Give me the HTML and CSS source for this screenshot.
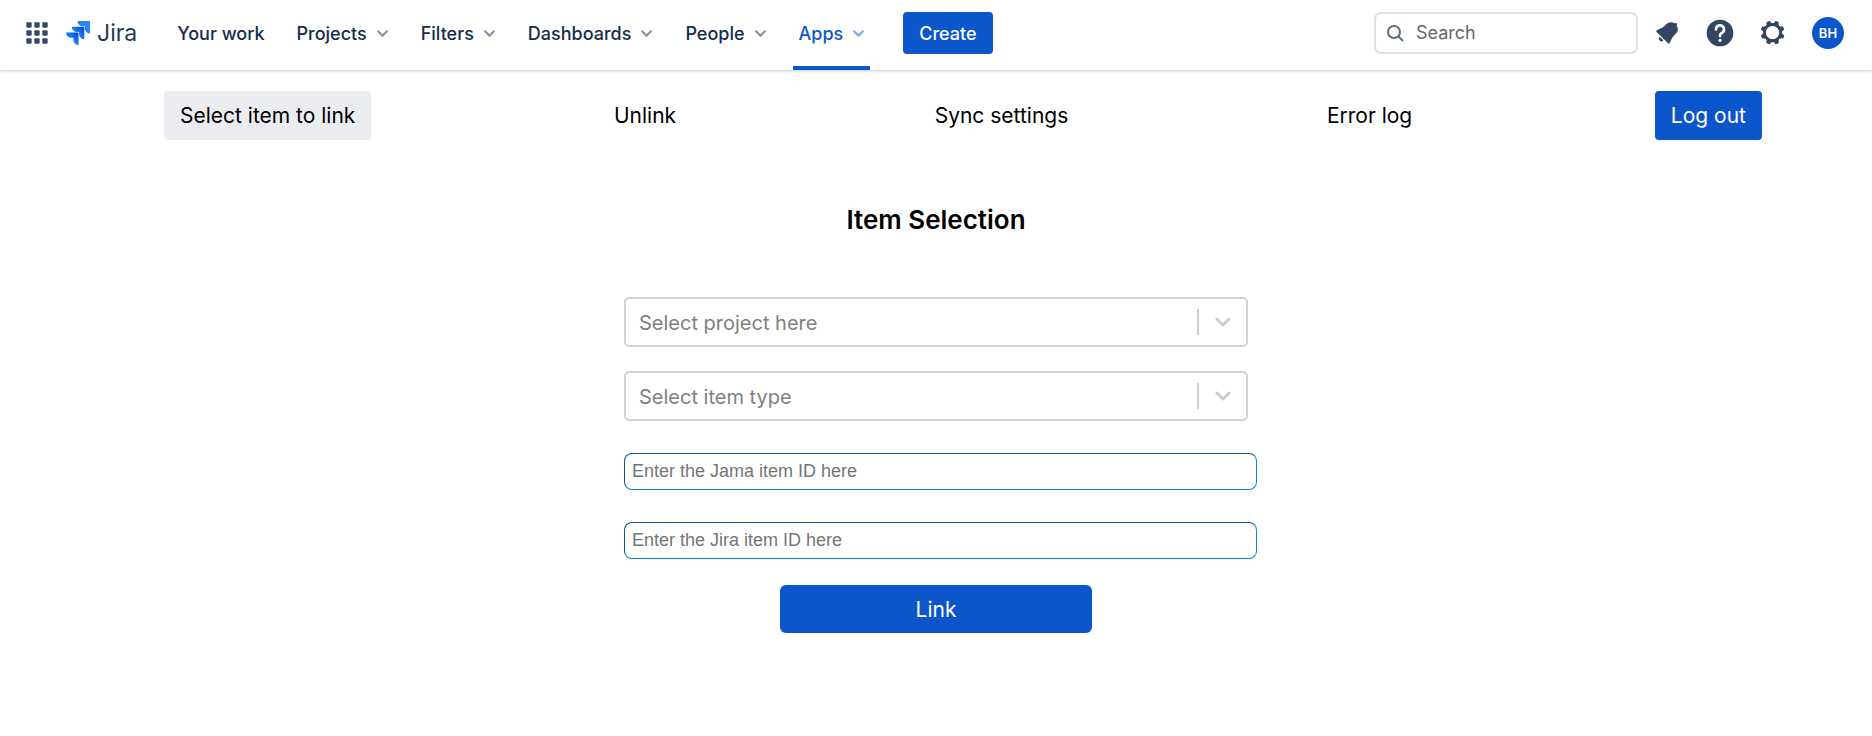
FILE: index.html
```html
<!DOCTYPE html>
<html lang="en">
<head>
<meta charset="utf-8">
<meta name="viewport" content="width=device-width, initial-scale=1">
<title>Item Selection - Jira</title>
<link rel="stylesheet" href="styles.css">
</head>
<body>
<header class="topbar">
  <button class="icon-button" type="button" aria-label="App switcher">
    <svg class="icon" viewBox="0 0 24 24" aria-hidden="true"><g fill="currentColor"><rect x="4" y="4" width="4" height="4" rx=".6"/><rect x="10" y="4" width="4" height="4" rx=".6"/><rect x="16" y="4" width="4" height="4" rx=".6"/><rect x="4" y="10" width="4" height="4" rx=".6"/><rect x="10" y="10" width="4" height="4" rx=".6"/><rect x="16" y="10" width="4" height="4" rx=".6"/><rect x="4" y="16" width="4" height="4" rx=".6"/><rect x="10" y="16" width="4" height="4" rx=".6"/><rect x="16" y="16" width="4" height="4" rx=".6"/></g></svg>
  </button>
  <a class="brand" href="#">
    <svg class="brand-mark" viewBox="0 0 24 24" aria-hidden="true">
      <defs>
        <linearGradient id="g1" x1="1" y1="0" x2=".4" y2=".6"><stop offset=".18" stop-color="#0052cc"/><stop offset="1" stop-color="#2684ff"/></linearGradient>
      </defs>
      <path fill="#2684ff" d="M23.013 0H11.455a5.215 5.215 0 0 0 5.215 5.215h2.129v2.057A5.215 5.215 0 0 0 24 12.483V1.005A1.001 1.001 0 0 0 23.013 0Z"/>
      <path fill="url(#g1)" d="M17.294 5.757H5.736a5.215 5.215 0 0 0 5.215 5.214h2.129v2.058a5.218 5.218 0 0 0 5.215 5.214V6.758a1.001 1.001 0 0 0-1.001-1.001z"/>
      <path fill="url(#g1)" d="M11.571 11.513H0a5.218 5.218 0 0 0 5.232 5.215h2.130v2.057A5.215 5.215 0 0 0 12.575 24V12.518a1.005 1.005 0 0 0-1.005-1.005z"/>
    </svg>
    <span>Jira</span>
  </a>
  <nav class="main-nav" aria-label="Primary">
    <a class="nav-item" href="#">Your work</a>
    <button class="nav-item" type="button">Projects <svg class="caret" viewBox="0 0 12 12" aria-hidden="true"><path d="M2 4l4 4 4-4"/></svg></button>
    <button class="nav-item" type="button">Filters <svg class="caret" viewBox="0 0 12 12" aria-hidden="true"><path d="M2 4l4 4 4-4"/></svg></button>
    <button class="nav-item" type="button">Dashboards <svg class="caret" viewBox="0 0 12 12" aria-hidden="true"><path d="M2 4l4 4 4-4"/></svg></button>
    <button class="nav-item" type="button">People <svg class="caret" viewBox="0 0 12 12" aria-hidden="true"><path d="M2 4l4 4 4-4"/></svg></button>
    <button class="nav-item nav-item-active" type="button">Apps <svg class="caret" viewBox="0 0 12 12" aria-hidden="true"><path d="M2 4l4 4 4-4"/></svg></button>
  </nav>
  <button class="create" type="button">Create</button>
  <label class="search">
    <svg class="search-icon" viewBox="0 0 16 16" aria-hidden="true"><circle cx="7" cy="7" r="6"/><path d="M11.500 11.500l4 4"/></svg>
    <input class="search-input" type="search" placeholder="Search" aria-label="Search">
  </label>
  <div class="actions">
    <button class="icon-button" type="button" aria-label="Notifications">
      <svg class="icon" viewBox="0 0 24 24" aria-hidden="true"><path fill="currentColor" d="M6.485 17.669a2 2 0 002.829 0l-2.829-2.83a2 2 0 000 2.830zm4.897-12.191l-.725.725c-.782.782-2.210 1.813-3.206 2.311l-3.017 1.509c-.495.248-.584.774-.187 1.171l8.556 8.556c.398.396.922.313 1.171-.188l1.510-3.016c.494-.988 1.526-2.420 2.311-3.206l.725-.726a5.048 5.048 0 00.640-6.356 1.010 1.010 0 10-1.354-1.494c-.023.025-.046.049-.066.075a5.043 5.043 0 00-2.788-.840 5.036 5.036 0 00-3.570 1.478z"/></svg>
    </button>
    <button class="icon-button" type="button" aria-label="Help">
      <svg class="icon" viewBox="0 0 24 24" aria-hidden="true"><circle cx="12" cy="12" r="10" fill="currentColor"/><path d="M9 9.300a3 3 0 1 1 4.300 2.700c-.9.450-1.300.9-1.300 2v.2" fill="none" stroke="#fff" stroke-width="2" stroke-linecap="round"/><circle cx="12" cy="17.500" r="1.200" fill="#fff"/></svg>
    </button>
    <button class="icon-button" type="button" aria-label="Settings">
      <svg class="icon" viewBox="0 0 24 24" aria-hidden="true"><path fill="currentColor" fill-rule="evenodd" d="M11.701 16.7a5.002 5.002 0 110-10.003 5.002 5.002 0 010 10.004m8.368-3.117a1.995 1.995 0 01-1.346-1.885c0-.876.563-1.613 1.345-1.885a.48.48 0 00.315-.574 8.947 8.947 0 00-.836-1.993.477.477 0 00-.598-.195 2.04 2.04 0 01-1.29.08 1.988 1.988 0 01-1.404-1.395 2.04 2.04 0 01.076-1.297.478.478 0 00-.196-.597 8.98 8.98 0 00-1.975-.826.479.479 0 00-.574.314 1.995 1.995 0 01-1.885 1.346 1.994 1.994 0 01-1.884-1.345.482.482 0 00-.575-.315c-.708.2-1.379.485-2.004.842a.47.47 0 00-.198.582A2.002 2.002 0 014.445 7.06a.478.478 0 00-.595.196 8.946 8.946 0 00-.833 1.994.48.48 0 00.308.572 1.995 1.995 0 011.323 1.877c0 .867-.552 1.599-1.324 1.877a.479.479 0 00-.308.57 8.99 8.99 0 00.723 1.79.477.477 0 00.624.194c.595-.273 1.343-.264 2.104.238.117.077.225.185.302.3.527.8.512 1.58.198 2.188a.473.473 0 00.168.628 8.946 8.946 0 002.11.897.474.474 0 00.57-.313 1.995 1.995 0 011.886-1.353c.878 0 1.618.567 1.887 1.353a.475.475 0 00.57.313 8.964 8.964 0 002.084-.883.473.473 0 00.167-.631c-.318-.608-.337-1.393.191-2.195.077-.116.185-.225.302-.302.772-.511 1.527-.513 2.125-.23a.477.477 0 00.628-.19 8.925 8.925 0 00.728-1.793.478.478 0 00-.314-.573"/></svg>
    </button>
    <button class="avatar" type="button">BH</button>
  </div>
</header>
<main>
  <nav class="tabs" aria-label="Link manager">
    <a class="tab tab-current" href="#">Select item to link</a>
    <a class="tab" href="#">Unlink</a>
    <a class="tab" href="#">Sync settings</a>
    <a class="tab" href="#">Error log</a>
    <button class="tab tab-logout" type="button">Log out</button>
  </nav>
  <h1 class="title">Item Selection</h1>
  <form class="link-form">
    <div class="select-box">
      <select class="select" aria-label="Project"><option>Select project here</option></select>
      <svg class="select-caret" viewBox="0 0 16 16" aria-hidden="true"><path d="M2 5l6 6 6-6"/></svg>
    </div>
    <div class="select-box">
      <select class="select" aria-label="Item type"><option>Select item type</option></select>
      <svg class="select-caret" viewBox="0 0 16 16" aria-hidden="true"><path d="M2 5l6 6 6-6"/></svg>
    </div>
    <input class="field" type="text" placeholder="Enter the Jama item ID here" aria-label="Jama item ID">
    <input class="field" type="text" placeholder="Enter the Jira item ID here" aria-label="Jira item ID">
    <button class="submit" type="button">Link</button>
  </form>
</main>
</body>
</html>
```
FILE: styles.css
```css
* {
  box-sizing: border-box;
}

body {
  margin: 0;
  background: #fff;
  color: #000;
  font-family: Inter, "Liberation Sans", sans-serif;
}

button,
input,
select {
  margin: 0;
  font-family: inherit;
}

a {
  text-decoration: none;
}

.topbar {
  display: flex;
  align-items: center;
  height: 70px;
  padding: 0 28px 4px 21px;
  box-shadow: 0 1px 1px #d9dce2, 0 2px 3px #e6e8ec;
  color: #344563;
}

.icon-button {
  display: flex;
  padding: 0;
  border: 0;
  background: none;
  color: inherit;
}

.icon {
  width: 32px;
  height: 32px;
}

.brand {
  display: flex;
  align-items: center;
  gap: 7px;
  margin-left: 13px;
  color: #253858;
  font-size: 23px;
  line-height: 24px;
}

.brand-mark {
  width: 24px;
  height: 24px;
}

.main-nav {
  display: flex;
  align-self: stretch;
  gap: 21px;
  margin: 0 33px -4px 34px;
}

.nav-item {
  display: flex;
  align-items: center;
  gap: 9px;
  padding: 0 5px 0 6px;
  border: 0;
  border-bottom: 4px solid transparent;
  background: none;
  color: #172b4d;
  font-size: 18px;
  font-weight: 500;
  white-space: nowrap;
}

.nav-item-active {
  border-bottom-color: #0c56cc;
  color: #0c56cc;
}

.caret {
  width: 13px;
  height: 13px;
  fill: none;
  stroke: currentColor;
  stroke-width: 2;
  stroke-linecap: round;
  stroke-linejoin: round;
  opacity: .5;
}

.create {
  height: 42px;
  padding: 0 16px;
  border: 0;
  border-radius: 4px;
  background: #0c56cc;
  color: #fff;
  font-size: 18px;
  font-weight: 500;
}

.search {
  display: flex;
  align-items: center;
  gap: 13px;
  width: 264px;
  height: 42px;
  margin-left: auto;
  padding: 0 11px;
  border: 2px solid #dfe1e6;
  border-radius: 7px;
}

.search-icon {
  flex: none;
  width: 16px;
  height: 16px;
  overflow: visible;
  fill: none;
  stroke: #5e6c84;
  stroke-width: 2;
  stroke-linecap: round;
}

.search-input {
  flex: 1;
  min-width: 0;
  padding: 0 0 2px;
  border: 0;
  background: none;
  font-size: 18px;
}

.search-input::placeholder {
  color: #666;
  opacity: 1;
}

.field::placeholder {
  color: #757575;
  opacity: 1;
}

.actions {
  display: flex;
  align-items: center;
  gap: 21px;
  margin-left: 13px;
}

.avatar {
  width: 32px;
  height: 32px;
  margin-left: 2px;
  padding: 0;
  border: 0;
  border-radius: 50%;
  background: #0c56cc;
  color: #fff;
  font-size: 13px;
  font-weight: 600;
}

.tabs {
  display: flex;
  justify-content: space-between;
  margin: 21px 110px 0 164px;
}

.tab {
  padding: 12px 16px;
  border: 0;
  border-radius: 4px;
  background: none;
  color: #000;
  font-size: 21px;
  line-height: 25px;
  white-space: nowrap;
}

.tab-current {
  background: #ebecf0;
}

.tab-logout {
  background: #0c56cc;
  color: #fff;
}

.title {
  margin: 63px 0 61px;
  font-size: 26px;
  font-weight: 600;
  line-height: 33px;
  text-align: center;
}

.link-form {
  display: flex;
  flex-direction: column;
  width: calc(100% / 3);
  margin: 0 auto;
}

.select-box {
  position: relative;
  margin-bottom: 24px;
}

.select {
  display: block;
  width: 100%;
  height: 50px;
  padding: 2px 60px 0 13px;
  border: 2px solid #d2d2d2;
  border-radius: 5px;
  appearance: none;
  background: linear-gradient(#ccc, #ccc) right 47px center / 2px 26px no-repeat #fff;
  color: #808080;
  font-size: 20px;
}

.select-caret {
  position: absolute;
  top: 17px;
  right: 17px;
  width: 16px;
  height: 16px;
  fill: none;
  stroke: #ccc;
  stroke-width: 3;
  stroke-linecap: round;
  stroke-linejoin: round;
  pointer-events: none;
}

.field {
  width: calc(100% + 9px);
  height: 37px;
  margin: 8px 0 24px;
  padding: 0 7px;
  border: 1px solid;
  border-color: #0b5590 #0c86d0 #0c86d0 #0b5590;
  border-radius: 8px;
  font-family: "Liberation Sans", Arial, sans-serif;
  font-size: 18px;
}

.submit {
  align-self: center;
  width: 50%;
  height: 48px;
  margin-top: 2px;
  border: 0;
  border-radius: 6px;
  background: #0c56cc;
  color: #fff;
  font-size: 21px;
}
```
